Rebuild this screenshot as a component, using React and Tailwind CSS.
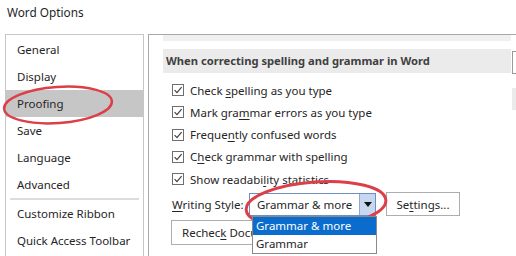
import React from 'react';

const font = { fontFamily: '"Noto Sans", "Open Sans", sans-serif' };

const navItems = ['General', 'Display', 'Proofing', 'Save', 'Language', 'Advanced'];
const navItems2 = ['Customize Ribbon', 'Quick Access Toolbar'];

const U = ({ children }) => <span className="underline underline-offset-2">{children}</span>;

const options = [
  <>Check <U>s</U>pelling as you type</>,
  <>Mark gra<U>m</U>mar errors as you type</>,
  <>Freque<U>n</U>tly confused words</>,
  <>C<U>h</U>eck grammar with spelling</>,
  <>Show readabi<U>l</U>ity statistics</>,
];

const CheckBox = () => (
  <div className="w-[12px] h-[12px] border border-[#6e6e6e] bg-white flex items-center justify-center shrink-0">
    <svg width="10" height="10" viewBox="0 0 10 10">
      <path d="M1.6 5.2 L4 7.6 L8.6 2.2" fill="none" stroke="#404040" strokeWidth="1.2" />
    </svg>
  </div>
);

export default function App() {
  return (
    <div className="relative w-[516px] h-[256px] bg-white overflow-hidden text-[11.5px] text-[#262626]" style={font}>
      {/* Title */}
      <div className="h-[34px] pl-[7px] pt-[4px] text-[11.8px] text-[#1f1f1f]">Word Options</div>

      <div className="flex h-[222px]">
        {/* Left nav */}
        <div className="ml-[5px] w-[139px] border-t border-l border-r border-[#c6c6c6] pt-[1px]">
          {navItems.map((item) => (
            <div
              key={item}
              className={`h-[27px] flex items-center pl-[11px] ${item === 'Proofing' ? 'bg-[#c6c6c6]' : ''}`}
            >
              {item}
            </div>
          ))}
          <div className="mx-[4px] h-[2px] bg-[#dcdcdc]" />
          {navItems2.map((item) => (
            <div key={item} className="h-[27px] flex items-center pl-[11px]">
              {item}
            </div>
          ))}
        </div>

        {/* Right panel */}
        <div className="ml-[4px] flex-1 border-t border-l border-[#a8a8a8] pl-[14px]">
          <div className="flex h-[38px]">
            <div className="flex-1">
              <div className="h-[6px] bg-[#f0f0f0]" />
              <div className="mt-[8px] h-[24px] bg-[#ebebeb] flex items-center pl-[3px] font-bold text-[11.2px] text-[#404040]">
                When correcting spelling and grammar in Word
              </div>
            </div>
            <div className="w-[4px] ml-[1px] pt-[16px]">
              <div className="h-[23px] border-t border-b border-l border-[#9a9a9a]" />
              <div className="mt-[14px] h-[22px] bg-[#ebebeb]" />
            </div>
          </div>

          <div className="pl-[9px] pt-[6px]">
            {options.map((opt, i) => (
              <div key={i} className="h-[22.3px] flex items-center gap-[6px]">
                <CheckBox />
                <span>{opt}</span>
              </div>
            ))}

            <div className="mt-[2px] flex items-center">
              <span className="w-[77px]"><U>W</U>riting Style:</span>
              <div className="relative w-[127px] h-[23px] border border-[#6f8fbf] flex">
                <div className="flex-1 flex items-center pl-[7px]">Grammar &amp; more</div>
                <div className="w-[16px] bg-[#c7d7ef] border-l border-[#8fa9d3] flex items-center justify-center">
                  <svg width="8" height="5" viewBox="0 0 8 5">
                    <path d="M0 0 H8 L4 5 Z" fill="#111" />
                  </svg>
                </div>
                {/* Open list */}
                <div className="absolute left-[2px] top-[22px] w-[125px] border border-[#8a8a8a] bg-white z-10">
                  <div className="h-[18px] bg-[#0a6ccc] text-white flex items-center pl-[3px]">Grammar &amp; more</div>
                  <div className="h-[18px] flex items-center pl-[3px]">Grammar</div>
                </div>
              </div>
              <div className="ml-[10px] w-[74px] h-[24px] border border-[#adadad] flex items-center justify-center">
                <span>Se<U>t</U>tings...</span>
              </div>
            </div>

            <div className="mt-[4px] w-[130px] h-[25px] border border-[#adadad] flex items-center pl-[10px] -ml-[1px]">
              <span className="whitespace-nowrap">Rechec<U>k</U> Document</span>
            </div>
          </div>
        </div>
      </div>

      {/* Red hand-drawn ellipses */}
      <svg className="absolute inset-0 pointer-events-none" width="516" height="256">
        <ellipse cx="58" cy="105" rx="54" ry="18" transform="rotate(-4 58 105)" fill="none" stroke="#dc3f48" strokeWidth="2.5" />
        <ellipse cx="316" cy="205" rx="70" ry="23" transform="rotate(-4 316 205)" fill="none" stroke="#dc3f48" strokeWidth="3" />
      </svg>
    </div>
  );
}
